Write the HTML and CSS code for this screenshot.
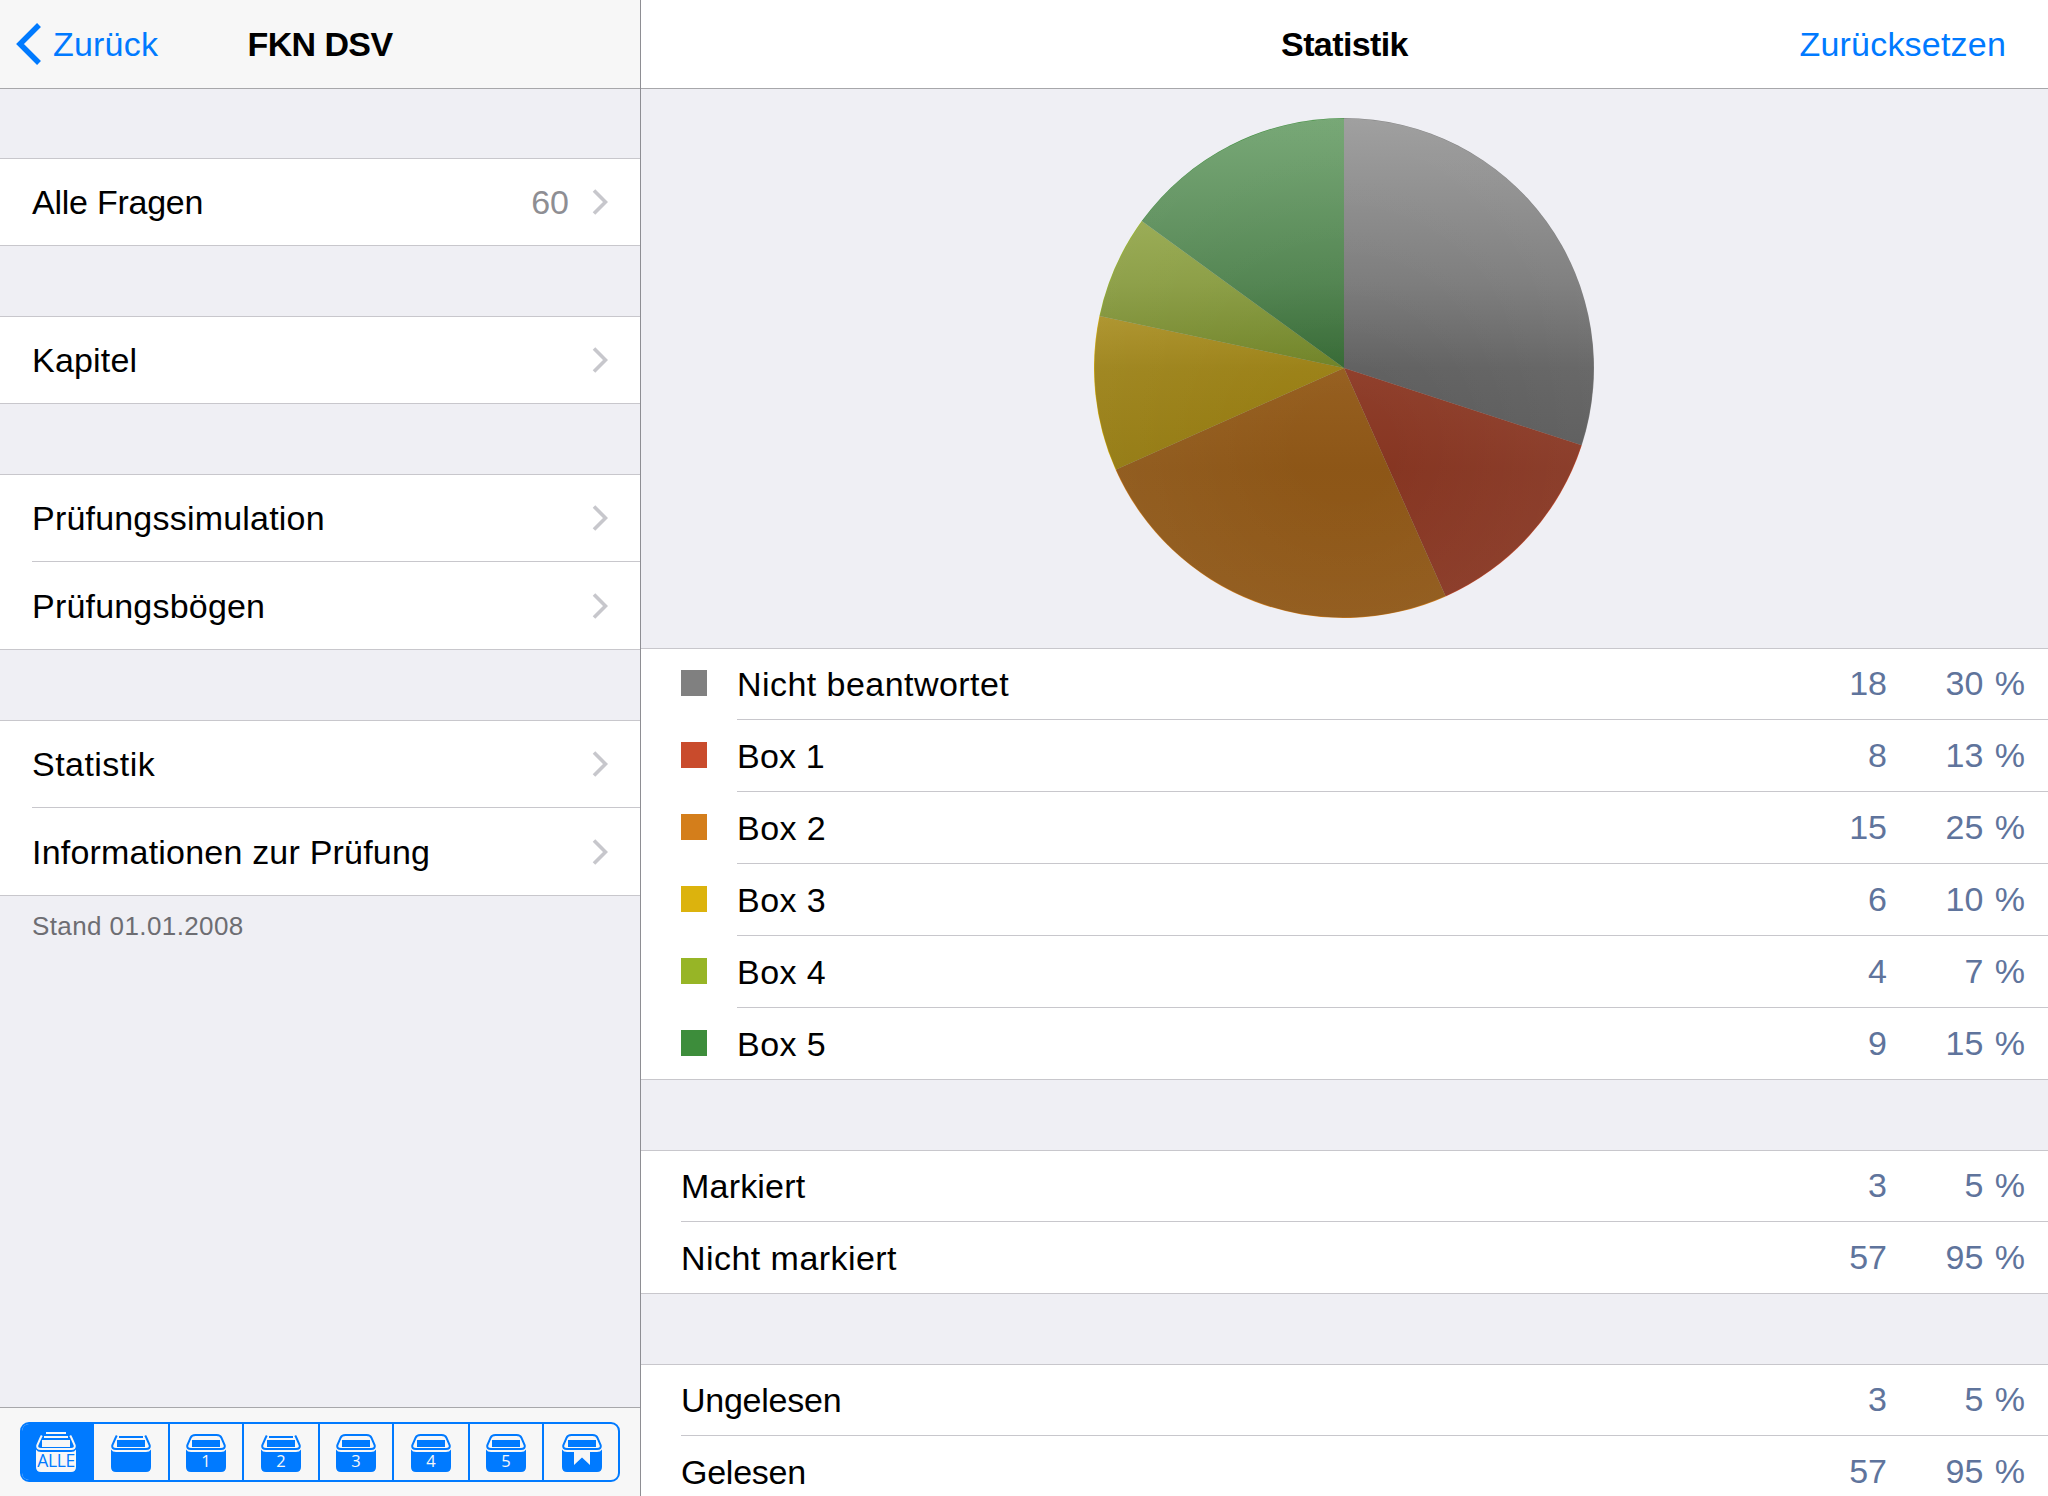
FILE: index.html
```html
<!DOCTYPE html>
<html lang="de">
<head>
    <meta charset="UTF-8">
    <meta name="viewport" content="width=device-width, initial-scale=1.0">
    <title>Statistik</title>
    <link rel="stylesheet" href="styles.css">
</head>
<body>
    <!-- Shared icons -->
    <svg class="defs" width="0" height="0">
        <symbol id="chevron" viewBox="0 0 16 26">
            <path d="M2 1.5 L13.5 13 L2 24.5" fill="none" stroke="#c7c7cc" stroke-width="3.6"/>
        </symbol>
        <symbol id="box-body" viewBox="0 0 40 40">
            <path d="M0 17.5 Q1.5 20 5 20 H35 Q38.5 20 40 17.5 V35 Q40 40 35 40 H5 Q0 40 0 35 Z" fill="currentColor"/>
            <rect x="6" y="8" width="28" height="7" fill="currentColor"/>
        </symbol>
        <symbol id="box-closed" viewBox="0 0 40 40">
            <use href="#box-body"/>
            <path d="M9.5 3 H30.5 Q34.5 3 35.5 6 L38.6 13 Q39.6 17 35 17 H5 Q.4 17 1.4 13 L4.5 6 Q5.5 3 9.5 3 Z" fill="none" stroke="currentColor" stroke-width="2"/>
        </symbol>
        <symbol id="box-open" viewBox="0 0 40 40">
            <use href="#box-body"/>
            <path d="M5.8 3.6 L4.5 6 L1.4 13 Q.4 17 5 17 H35 Q39.6 17 38.6 13 L35.5 6 L34.2 3.6" fill="none" stroke="currentColor" stroke-width="2"/>
            <rect x="8" y="4" width="24" height="2" fill="currentColor"/>
        </symbol>
    </svg>

    <aside class="sidebar">
        <header class="navbar">
            <a class="back">
                <svg width="26" height="42" viewBox="0 0 26 42"><path d="M23 2 L4 21 L23 40" fill="none" stroke="#007aff" stroke-width="5.5"/></svg>
                Zurück
            </a>
            <h1>FKN DSV</h1>
        </header>

        <nav class="menu">
            <ul class="group">
                <li><span class="tight">Alle Fragen</span><span class="count">60</span><svg class="chevron"><use href="#chevron"/></svg></li>
            </ul>
            <ul class="group">
                <li><span>Kapitel</span><svg class="chevron"><use href="#chevron"/></svg></li>
            </ul>
            <ul class="group">
                <li><span>Prüfungssimulation</span><svg class="chevron"><use href="#chevron"/></svg></li>
                <li><span>Prüfungsbögen</span><svg class="chevron"><use href="#chevron"/></svg></li>
            </ul>
            <ul class="group">
                <li><span class="wide">Statistik</span><svg class="chevron"><use href="#chevron"/></svg></li>
                <li><span>Informationen zur Prüfung</span><svg class="chevron"><use href="#chevron"/></svg></li>
            </ul>
        </nav>
        <p class="footnote">Stand 01.01.2008</p>

        <footer class="toolbar">
            <div class="segments">
                <button class="segment active">
                    <svg viewBox="0 0 40 40"><use href="#box-open"/><rect x="10" width="20" height="2" fill="currentColor"/><text x="20" y="35" class="all">ALLE</text></svg>
                </button>
                <button class="segment"><svg viewBox="0 0 40 40"><use href="#box-open"/></svg></button>
                <button class="segment"><svg viewBox="0 0 40 40"><use href="#box-closed"/><text x="20" y="35">1</text></svg></button>
                <button class="segment"><svg viewBox="0 0 40 40"><use href="#box-open"/><text x="20" y="35">2</text></svg></button>
                <button class="segment"><svg viewBox="0 0 40 40"><use href="#box-closed"/><text x="20" y="35">3</text></svg></button>
                <button class="segment"><svg viewBox="0 0 40 40"><use href="#box-closed"/><text x="20" y="35">4</text></svg></button>
                <button class="segment"><svg viewBox="0 0 40 40"><use href="#box-closed"/><text x="20" y="35">5</text></svg></button>
                <button class="segment"><svg viewBox="0 0 40 40"><use href="#box-closed"/><path d="M12 19.5 H28 V33 L20 25.5 L12 33 Z" fill="#f7f7f7"/></svg></button>
            </div>
        </footer>
    </aside>

    <main class="detail">
        <header class="navbar">
            <h1>Statistik</h1>
            <a class="reset">Zurücksetzen</a>
        </header>

        <div class="chart">
            <svg width="500" height="500" viewBox="0 0 500 500">
                <defs>
                    <linearGradient id="shade" x1="0" y1="0" x2="0" y2="1">
                        <stop offset="0" stop-color="#c8c8c8"/>
                        <stop offset=".33" stop-color="#6e6e6e"/>
                        <stop offset=".5" stop-color="#2a2a2a"/>
                        <stop offset=".7" stop-color="#101010"/>
                        <stop offset="1" stop-color="#1a1a1a"/>
                    </linearGradient>
                    <radialGradient id="rim" gradientUnits="userSpaceOnUse" cx="250" cy="330" r="300">
                        <stop offset=".15" stop-color="#fff" stop-opacity="0"/>
                        <stop offset="1" stop-color="#fff" stop-opacity=".06"/>
                    </radialGradient>
                </defs>
                <path fill="#808080" d="M250 250 L250 0 A250 250 0 0 1 487.76 327.25 Z"/>
                <path fill="#c94b2c" d="M250 250 L487.76 327.25 A250 250 0 0 1 351.68 478.39 Z"/>
                <path fill="#d47e1b" d="M250 250 L351.68 478.39 A250 250 0 0 1 21.61 351.68 Z"/>
                <path fill="#dcb30d" d="M250 250 L21.61 351.68 A250 250 0 0 1 5.46 198.02 Z"/>
                <path fill="#97b526" d="M250 250 L5.46 198.02 A250 250 0 0 1 47.75 103.05 Z"/>
                <path fill="#3d8d3b" d="M250 250 L47.75 103.05 A250 250 0 0 1 250 0 Z"/>
                <circle cx="250" cy="250" r="249.5" fill="url(#shade)" fill-opacity=".36"/>
                <circle cx="250" cy="250" r="249.5" fill="url(#rim)"/>
            </svg>
        </div>

        <ul class="group boxes">
            <li><i class="swatch unanswered"></i><div><span class="wide">Nicht beantwortet</span><b>18</b><b class="percent">30 %</b></div></li>
            <li><i class="swatch box1"></i><div><span>Box 1</span><b>8</b><b class="percent">13 %</b></div></li>
            <li><i class="swatch box2"></i><div><span class="wide">Box 2</span><b>15</b><b class="percent">25 %</b></div></li>
            <li><i class="swatch box3"></i><div><span class="wide">Box 3</span><b>6</b><b class="percent">10 %</b></div></li>
            <li><i class="swatch box4"></i><div><span class="wide">Box 4</span><b>4</b><b class="percent">7 %</b></div></li>
            <li><i class="swatch box5"></i><div><span class="wide">Box 5</span><b>9</b><b class="percent">15 %</b></div></li>
        </ul>
        <ul class="group">
            <li><div><span>Markiert</span><b>3</b><b class="percent">5 %</b></div></li>
            <li><div><span class="wide">Nicht markiert</span><b>57</b><b class="percent">95 %</b></div></li>
        </ul>
        <ul class="group">
            <li><div><span class="tight">Ungelesen</span><b>3</b><b class="percent">5 %</b></div></li>
            <li><div><span class="tight">Gelesen</span><b>57</b><b class="percent">95 %</b></div></li>
        </ul>
    </main>
</body>
</html>
```
FILE: styles.css
```css
* {
    box-sizing: border-box;
}
body {
    display: flex;
    height: 100vh;
    margin: 0;
    font-family: "Liberation Sans", Arial, sans-serif;
    font-size: 34px;
    line-height: 40px;
    color: #000;
    background: #efeff4;
    overflow: hidden;
}
h1, p, ul {
    margin: 0;
    padding: 0;
}
ul {
    list-style: none;
}
.defs {
    display: none;
}

/* Panes */
.sidebar {
    display: flex;
    flex-direction: column;
    width: 640px;
}
.detail {
    flex: 1;
    border-left: 1px solid #8e8e93;
    overflow: hidden;
}

/* Navigation bars */
.navbar {
    display: grid;
    grid-template-columns: 1fr auto 1fr;
    align-items: center;
    height: 89px;
    border-bottom: 1px solid #a7a7aa;
    background: #fff;
    color: #007aff;
    letter-spacing: 0.2px;
}
.navbar h1 {
    grid-column: 2;
    font-size: 34px;
    font-weight: bold;
    letter-spacing: -0.6px;
    color: #000;
}
.sidebar .navbar {
    background: #f7f7f7;
}
.back {
    display: flex;
    align-items: center;
    gap: 11px;
    padding-left: 16px;
}
.reset {
    justify-self: end;
    padding-right: 42px;
}

/* Grouped lists */
.group {
    background: #fff;
    border-bottom: 1px solid #c8c7cc;
    box-shadow: inset 0 1px #c8c7cc;
}
.group span {
    letter-spacing: 0.2px;
}
.group .wide {
    letter-spacing: 0.45px;
}
.group .tight {
    letter-spacing: -0.25px;
}
.group .count {
    margin-right: 23px;
    letter-spacing: 0;
    color: #8e8e93;
}
.menu {
    display: flex;
    flex-direction: column;
    gap: 70px;
    padding-top: 69px;
}
.menu li {
    display: flex;
    align-items: center;
    height: 88px;
    margin-left: 32px;
    padding-right: 32px;
    border-bottom: 1px solid #c8c7cc;
}
.menu li:last-child {
    height: 87px;
    border-bottom: none;
}
.menu li span:first-child {
    flex: 1;
}
.chevron {
    width: 16px;
    height: 26px;
}
.footnote {
    padding: 14px 32px;
    font-size: 26px;
    line-height: 32px;
    letter-spacing: 0.4px;
    color: #6d6d72;
}

/* Box filter */
.toolbar {
    height: 89px;
    margin-top: auto;
    padding: 14px 20px;
    border-top: 1px solid #a7a7aa;
    background: #f7f7f7;
}
.segments {
    display: grid;
    grid-template-columns: 72px 76px 74px 76px 74px 76px 74px 74px;
    height: 60px;
    border: 2px solid #007aff;
    border-radius: 9px;
    overflow: hidden;
}
.segment {
    display: flex;
    align-items: center;
    justify-content: center;
    padding: 0;
    border: none;
    border-right: 2px solid #007aff;
    background: none;
    color: #007aff;
}
.segment:last-child {
    padding-left: 2px;
    border-right: none;
}
.segment.active {
    padding-right: 4px;
    border-right: none;
    background: #007aff;
    color: #f7f7f7;
}
.segment svg {
    width: 40px;
    height: 40px;
    overflow: visible;
}
.segment text {
    font-family: "Open Sans", "Noto Sans", sans-serif;
    font-size: 16.5px;
    text-anchor: middle;
    fill: #f7f7f7;
}
.segment .all {
    font-size: 17.5px;
    letter-spacing: -0.4px;
    fill: #007aff;
}

/* Statistics */
.chart {
    display: flex;
    justify-content: center;
    height: 559px;
    padding: 29px 1px 0 0;
}
.detail .group {
    margin-bottom: 70px;
}
.detail li {
    display: flex;
    align-items: center;
    height: 72px;
    padding-left: 40px;
}
.detail li:last-child {
    height: 71px;
}
.detail li div {
    display: flex;
    align-items: center;
    flex: 1;
    height: 100%;
    padding-right: 23px;
    border-bottom: 1px solid #c8c7cc;
}
.detail li:last-child div {
    border-bottom: none;
}
.detail li span {
    flex: 1;
}
.detail b {
    padding-bottom: 2px;
    font-weight: normal;
    color: #5f749c;
}
.percent {
    width: 138px;
    text-align: right;
    word-spacing: 2px;
}
.swatch {
    width: 26px;
    height: 26px;
    margin: 0 30px 2px 0;
}
.unanswered {
    background: #808080;
}
.box1 {
    background: #c94b2c;
}
.box2 {
    background: #d47e1b;
}
.box3 {
    background: #dcb30d;
}
.box4 {
    background: #97b526;
}
.box5 {
    background: #3d8d3b;
}
```
